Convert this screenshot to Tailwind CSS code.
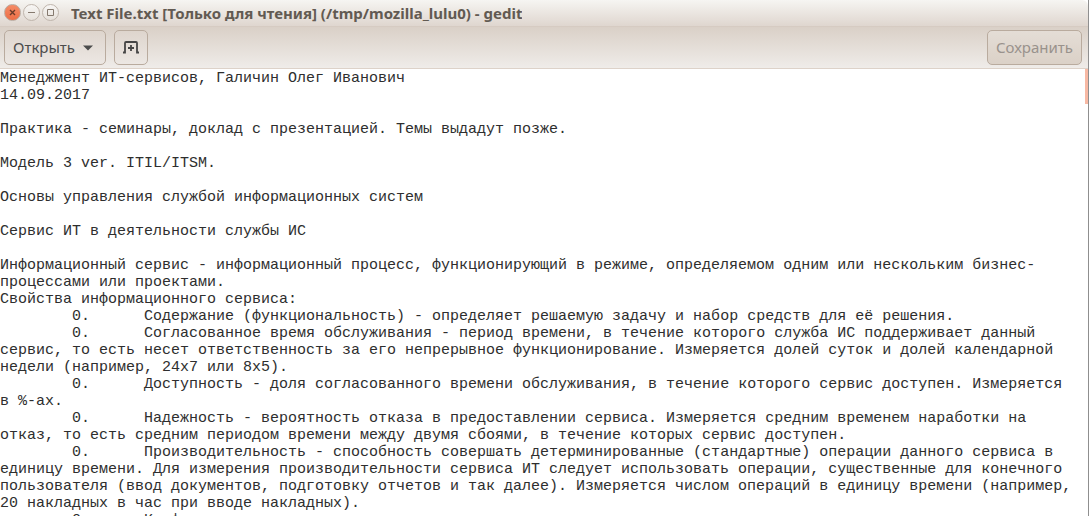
<!DOCTYPE html>
<html lang="ru">
  <head>
    <meta charset="UTF-8" />
    <meta name="viewport" content="width=device-width, initial-scale=1.0" />
    <title>Text File.txt - gedit</title>
    <script src="https://cdn.jsdelivr.net/npm/@tailwindcss/browser@4"></script>
  </head>
  <body class="h-screen overflow-hidden bg-[#8f8f8f] pr-px font-['Noto_Sans',sans-serif]">
    <div class="flex h-full flex-col bg-white">
      <!-- Title bar -->
      <header class="flex h-[27px] shrink-0 items-center gap-3 rounded-tr-md border-b border-[#d6cbc2] bg-linear-to-b from-[#f6f5f2] to-[#dfd6cf] pb-px pl-1">
        <div class="flex gap-[2px]">
          <button type="button" aria-label="Закрыть" class="flex size-[17px] items-center justify-center rounded-full border border-[#b9aaa0] bg-linear-to-b from-[#f58b66] to-[#ec6e45]">
            <svg class="size-[9px]" viewBox="0 0 9 9" fill="none" stroke="#6b3a28" stroke-width="1.4"><path d="M2 2l5 5M7 2l-5 5" /></svg>
          </button>
          <button type="button" aria-label="Свернуть" class="flex size-[17px] items-center justify-center rounded-full border border-[#bfb5ac] bg-linear-to-b from-[#f8f7f5] to-[#e6e0da]">
            <svg class="size-[9px]" viewBox="0 0 9 9" fill="none" stroke="#85796e"><path d="M1 4.5h7" /></svg>
          </button>
          <button type="button" aria-label="Развернуть" class="flex size-[17px] items-center justify-center rounded-full border border-[#bfb5ac] bg-linear-to-b from-[#f8f7f5] to-[#e6e0da]">
            <svg class="size-[9px]" viewBox="0 0 9 9" fill="none" stroke="#85796e"><path d="M1.5 1.5h6v6h-6z" /></svg>
          </button>
        </div>
        <h1 class="truncate text-[15px] leading-5 font-bold text-[#625a52]">Text File.txt [Только для чтения] (/tmp/mozilla_lulu0) - gedit</h1>
      </header>

      <!-- Toolbar -->
      <nav class="flex h-[42px] shrink-0 items-center gap-2 border-b border-[#ddd2c9] bg-linear-to-b from-[#dad0c7] to-[#efece9] pr-[6px] pl-1">
        <button type="button" class="flex h-[35px] items-center gap-2 rounded-[5px] border border-[#b9ab9e] bg-linear-to-b from-[#ded5cd] to-[#ece7e3] pr-3 pl-2 text-[15px] text-[#4c4c4c]">
          Открыть
          <svg class="h-[6px] w-[10px]" viewBox="0 0 10 6" fill="#4c4c4c"><path d="M0 0.5h10L5 5.5z" /></svg>
        </button>
        <button type="button" aria-label="Создать документ" class="flex h-[35px] w-[34px] items-center justify-center rounded-[5px] border border-[#b9ab9e] bg-linear-to-b from-[#ded5cd] to-[#ece7e3]">
          <svg class="h-[13px] w-4" viewBox="0 0 16 13" fill="none" stroke="#454545" stroke-width="1.8"><path d="M0 11.5h2V2q0-1 1-1h10q1 0 1 1v9.5h2" /><path d="M5 7h6M8 4v6" /></svg>
        </button>
        <button type="button" disabled class="ml-auto h-[35px] rounded-[5px] border border-[#b9ab9e] bg-linear-to-b from-[#e4ddd6] to-[#dbd1c7] px-2 text-[15px] text-[#99928c]">Сохранить</button>
      </nav>

      <!-- Document -->
      <main class="flex min-h-0 flex-1">
        <textarea readonly aria-label="Текст документа" spellcheck="false" class="block h-full min-w-0 flex-1 resize-none overflow-hidden pt-px pr-2 font-['Liberation_Mono',monospace] text-[15px] leading-[17px] whitespace-pre-wrap text-[#2e2e2e] [tab-size:8] outline-none">
Менеджмент ИТ-сервисов, Галичин Олег Иванович
14.09.2017

Практика - семинары, доклад с презентацией. Темы выдадут позже.

Модель 3 ver. ITIL/ITSM.

Основы управления службой информационных систем

Сервис ИТ в деятельности службы ИС

Информационный сервис - информационный процесс, функционирующий в режиме, определяемом одним или нескольким бизнес-процессами или проектами.
Свойства информационного сервиса:
	0.	Содержание (функциональность) - определяет решаемую задачу и набор средств для её решения.
	0.	Согласованное время обслуживания - период времени, в течение которого служба ИС поддерживает данный сервис, то есть несет ответственность за его непрерывное функционирование. Измеряется долей суток и долей календарной недели (например, 24х7 или 8х5).
	0.	Доступность - доля согласованного времени обслуживания, в течение которого сервис доступен. Измеряется в %-ах.
	0.	Надежность - вероятность отказа в предоставлении сервиса. Измеряется средним временем наработки на отказ, то есть средним периодом времени между двумя сбоями, в течение которых сервис доступен.
	0.	Производительность - способность совершать детерминированные (стандартные) операции данного сервиса в единицу времени. Для измерения производительности сервиса ИТ следует использовать операции, существенные для конечного пользователя (ввод документов, подготовку отчетов и так далее). Измеряется числом операций в единицу времени (например, 20 накладных в час при вводе накладных).
	0.	Конф</textarea>
        <div class="h-[35px] w-[3px] bg-[#f8b9a4]"></div>
      </main>
    </div>
  </body>
</html>
